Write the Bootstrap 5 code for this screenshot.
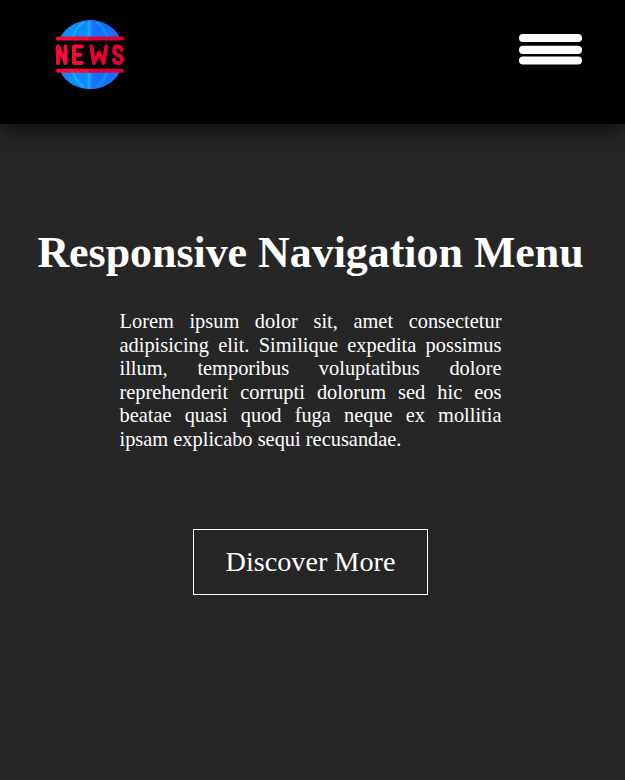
<!DOCTYPE html>
<html lang="en">
<head>
<meta charset="utf-8">
<meta name="viewport" content="width=device-width, initial-scale=1">
<title>Responsive Navigation Menu</title>
<link href="https://cdn.jsdelivr.net/npm/bootstrap@5.3.0/dist/css/bootstrap.min.css" rel="stylesheet">
<style>
body { background: #262626; font-family: "Liberation Serif", "Times New Roman", serif; height: 100vh; overflow: hidden; }
.site-header { height: 124px; background: #000; padding: 20px 43px 0 55px; box-shadow: 0 4px 18px rgba(0,0,0,.75); }
.menu-toggle { margin-top: 13px; line-height: 0; }
.hero { padding: 103px 4px 0 0; }
.hero-title { font-size: 43.9px; line-height: 50px; font-weight: 700; white-space: nowrap; }
.hero-text { width: 382px; margin-top: 33px; font-size: 20.4px; line-height: 23.6px; text-align: justify; }
.hero-btn { width: 235px; height: 66px; margin-top: 77px; padding-top: 1px; border: 1px solid #fff; font-size: 28.2px; line-height: 32px; }
</style>
<script src="https://cdn.jsdelivr.net/npm/bootstrap@5.3.0/dist/js/bootstrap.bundle.min.js"></script>
</head>
<body class="text-white d-flex flex-column">
<header class="site-header d-flex justify-content-between align-items-start">
  <a href="#" class="d-block lh-1" aria-label="News">
    <svg class="d-block" width="70" height="70" viewBox="0 0 70 70" fill="none">
      <path d="M5.500 17C11 6.500 23 .3 35 .3S59 6.500 64.500 17ZM5.500 52C11 63 23 69 35 69S59 63 64.500 52Z" fill="#0c8dff"/>
      <path d="M35 .3C47 .3 59 6.500 64.500 17H35ZM35 52H64.500C59 63 47 69 35 69Z" fill="#1670ff"/>
      <path d="M18 17C20 10 24 5 29 2M18 52C20 59 24 64 29 67M33.800 .5V17M33.800 52V69" stroke="#1ba8ff" stroke-width="2.400"/>
      <path d="M52 17C50 10 46 5 41 2M52 52C50 59 46 64 41 67M36 .5V17M36 52V69" stroke="#158cff" stroke-width="2.400"/>
      <path d="M3 18.500H35M3 50.800H35" stroke="#ff0838" stroke-width="4" stroke-linecap="round"/>
      <path d="M35 18.500H67M35 50.800H67" stroke="#e00035" stroke-width="4" stroke-linecap="round"/>
      <g stroke-width="3.900" stroke-linecap="round" stroke-linejoin="round">
        <path d="M3 43V26.500L10.500 43V26.500M27 26.500H19V43H27M19 34.800H25.500" stroke="#ff0838"/>
        <path d="M36.500 26.500L39 43L44 32.500L48.500 43L51.300 26.500" stroke="#e60035"/>
        <path d="M66.500 29.800C66 27.500 64.500 26.500 62.800 26.500C60.500 26.500 59 28 59 30.500C59 33 61 34.200 63 34.800C65.500 35.500 67 37 67 39.200C67 41.500 65.200 43 63 43C60.800 43 59.200 41.800 58.800 39.800" stroke="#e00035"/>
      </g>
    </svg>
  </a>
  <button type="button" class="menu-toggle btn border-0 p-0" aria-label="Menu">
    <svg class="d-block" width="63" height="32" viewBox="0 0 63 32" fill="#fff">
      <rect y="1" width="63" height="8" rx="4"/>
      <rect y="12.700" width="63" height="8.300" rx="4.100"/>
      <rect y="23.600" width="63" height="8" rx="4"/>
    </svg>
  </button>
</header>
<main class="hero d-flex flex-column align-items-center">
  <h1 class="hero-title m-0">Responsive Navigation Menu</h1>
  <p class="hero-text mb-0">Lorem ipsum dolor sit, amet consectetur adipisicing elit. Similique expedita possimus illum, temporibus voluptatibus dolore reprehenderit corrupti dolorum sed hic eos beatae quasi quod fuga neque ex mollitia ipsam explicabo sequi recusandae.</p>
  <a href="#" class="hero-btn text-white text-decoration-none d-flex align-items-center justify-content-center">Discover More</a>
</main>
</body>
</html>
